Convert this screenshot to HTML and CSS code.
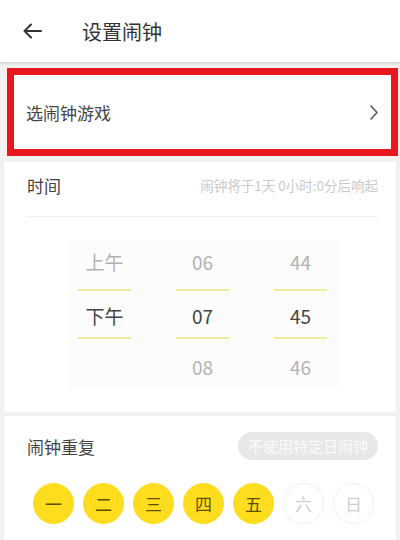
FILE: index.html
```html
<!DOCTYPE html>
<html lang="zh-CN">
<head>
    <meta charset="UTF-8">
    <meta name="viewport" content="width=device-width, initial-scale=1.0">
    <title>设置闹钟</title>
    <link rel="stylesheet" href="styles.css">
</head>
<body>
    <div class="header">
        <svg class="back" width="20" height="16" viewBox="0 0 20 16">
            <path d="M19 8H2.5M9 1.5L2.5 8L9 14.5" fill="none" stroke="#333" stroke-width="2" stroke-linecap="round" stroke-linejoin="round"/>
        </svg>
        <h1>设置闹钟</h1>
    </div>

    <!-- 游戏选择 -->
    <div class="game-card">
        <span>选闹钟游戏</span>
        <svg width="8" height="15" viewBox="0 0 8 15">
            <polyline points="1,1 7,7.5 1,14" fill="none" stroke="#555" stroke-width="1.5" stroke-linecap="round" stroke-linejoin="round"/>
        </svg>
    </div>

    <!-- 时间 -->
    <div class="card time-card">
        <div class="time-head">
            <span class="label">时间</span>
            <span class="hint">闹钟将于1天 0小时:0分后响起</span>
        </div>
        <div class="picker">
            <div class="col">
                <div class="item top">上午</div>
                <div class="line"></div>
                <div class="item mid">下午</div>
                <div class="line"></div>
                <div class="item bottom"></div>
            </div>
            <div class="col">
                <div class="item top">06</div>
                <div class="line"></div>
                <div class="item mid">07</div>
                <div class="line"></div>
                <div class="item bottom">08</div>
            </div>
            <div class="col">
                <div class="item top">44</div>
                <div class="line"></div>
                <div class="item mid">45</div>
                <div class="line"></div>
                <div class="item bottom">46</div>
            </div>
        </div>
    </div>

    <!-- 重复 -->
    <div class="card repeat-card">
        <div class="repeat-head">
            <span class="label">闹钟重复</span>
            <span class="pill">不使用特定日闹钟</span>
        </div>
        <div class="days">
            <span class="day on">一</span>
            <span class="day on">二</span>
            <span class="day on">三</span>
            <span class="day on">四</span>
            <span class="day on">五</span>
            <span class="day">六</span>
            <span class="day">日</span>
        </div>
    </div>
</body>
</html>
```

FILE: styles.css
```css
body {
    margin: 0;
    padding: 0;
    font-family: "Noto Sans CJK SC", "Noto Sans", sans-serif;
    background-color: #f1f1f1;
    height: 540px;
    overflow: hidden;
}

.header {
    height: 62px;
    background-color: #fff;
    display: flex;
    align-items: center;
    padding-left: 22px;
    box-shadow: 0 1px 3px rgba(0, 0, 0, 0.18);
    position: relative;
}

.header h1 {
    margin: 0 0 0 40px;
    font-size: 20px;
    font-weight: normal;
    color: #333;
}

.game-card {
    margin: 6px 2px 0 7px;
    height: 74px;
    border: 7px solid #e8161f;
    background-color: #fff;
    display: flex;
    align-items: center;
    justify-content: space-between;
    padding: 0 13px 0 12px;
    font-size: 17px;
    color: #444;
}

.card {
    background-color: #fff;
    margin: 0 4px;
    padding: 0 18px 0 23px;
}

.label {
    font-size: 17px;
    color: #444;
}

.time-card {
    margin-top: 6px;
    padding-bottom: 25px;
}

.time-head {
    height: 54px;
    display: flex;
    align-items: center;
    justify-content: space-between;
    border-bottom: 1px solid #efefef;
}

.time-head .label {
    margin-top: -8px;
}

.time-head .hint {
    font-size: 13.5px;
    color: #cacaca;
    margin-top: -8px;
}

.picker {
    width: 270px;
    height: 147px;
    margin: 23px auto 0;
    background-color: #fcfcfc;
    display: grid;
    grid-template-columns: repeat(3, 98px);
    justify-content: center;
}

.col {
    display: flex;
    flex-direction: column;
    align-items: center;
}

.item {
    width: 100%;
    text-align: center;
    font-size: 19px;
    color: #b3b3b3;
}

.item.top {
    height: 49px;
    line-height: 44px;
}

.item.mid {
    height: 42px;
    padding-top: 4px;
    line-height: 42px;
    color: #444;
}

.item.bottom {
    height: 48px;
    line-height: 56px;
}

.line {
    width: 53px;
    height: 2px;
    background-color: #f0ec9c;
}

.repeat-card {
    margin-top: 4px;
    height: 124px;
}

.repeat-head {
    padding-top: 16px;
    height: 28px;
    display: flex;
    align-items: center;
    justify-content: space-between;
}

.pill {
    height: 28px;
    line-height: 28px;
    padding: 0 10px;
    border-radius: 14px;
    background-color: #e8e8e8;
    color: #fafafa;
    font-size: 15px;
}

.days {
    display: flex;
    gap: 9px;
    margin: 23px 0 0 6px;
}

.day {
    width: 39px;
    height: 39px;
    border-radius: 50%;
    border: 1px solid #efefef;
    display: flex;
    align-items: center;
    justify-content: center;
    font-size: 17px;
    color: #cfcfcf;
    background-color: #fff;
}

.day.on {
    background-color: #fedd1f;
    border-color: #fedd1f;
    color: #5f5000;
}
```
